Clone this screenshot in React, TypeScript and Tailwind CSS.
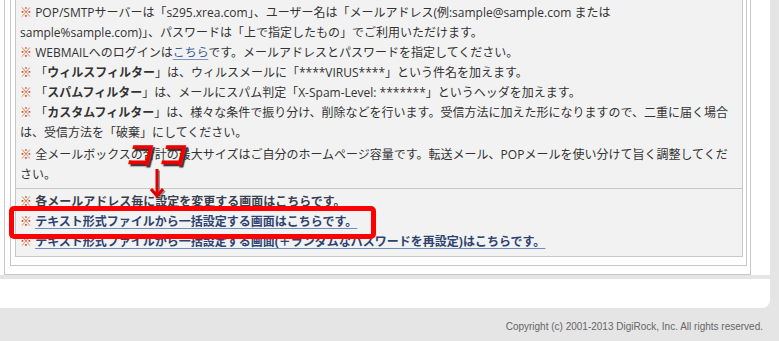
import React from "react";

const Mark = () => <span className="text-[#cc4a10]">※</span>;

export default function App() {
  return (
    <div className="relative w-[779px] h-[341px] overflow-hidden bg-[#e5e5e5] font-['Open_Sans','Noto_Sans_CJK_JP',sans-serif] text-[12px] text-[#333]">
      {/* main white area */}
      <div className="w-[770px] bg-white">
        <div className="ml-[4px] w-[747px] border-x border-b border-[#c8c8c8] pb-[8px]">
          <div className="ml-[5px] w-[737px] border-x border-b border-[#c8c8c8] pb-[8px]">
            <div className="ml-[4px] w-[728px] border-x border-b border-[#c8c8c8] bg-[#f2f2f2]">
              {/* top cell */}
              <div className="pl-[4px] pt-[3px] pb-[3px] leading-[20px] whitespace-nowrap">
                <div>
                  <Mark /> POP/SMTPサーバーは「s295.xrea.com」、ユーザー名は「メールアドレス(例:sample@sample.com または
                  <br />
                  sample%sample.com)」、パスワードは「上で指定したもの」でご利用いただけます。
                </div>
                <div>
                  <Mark /> WEBMAILへのログインは
                  <a className="text-[#3b5e9a] underline decoration-[#7d97c2] underline-offset-2">こちら</a>
                  です。メールアドレスとパスワードを指定してください。
                </div>
                <div>
                  <Mark /> 「<b>ウィルスフィルター</b>」は、ウィルスメールに「****VIRUS****」という件名を加えます。
                </div>
                <div>
                  <Mark /> 「<b>スパムフィルター</b>」は、メールにスパム判定「X-Spam-Level: *******」というヘッダを加えます。
                </div>
                <div>
                  <Mark /> 「<b>カスタムフィルター</b>」は、様々な条件で振り分け、削除などを行います。受信方法に加えた形になりますので、二重に届く場合
                  <br />
                  は、受信方法を「破棄」にしてください。
                </div>
                <div className="mt-[2px]">
                  <Mark /> 全メールボックスの合計の最大サイズはご自分のホームページ容量です。転送メール、POPメールを使い分けて旨く調整してくだ
                  <br />
                  さい。
                </div>
              </div>
              {/* bottom cell */}
              <div className="border-t border-[#c8c8c8] pl-[4px] pt-[3px] pb-[4px] leading-[20px] whitespace-nowrap font-bold">
                <div>
                  <Mark /> <span className="text-[#3a3f4f]">各メールアドレス毎に設定を変更する画面はこちらです。</span>
                </div>
                <div>
                  <Mark />{" "}
                  <a className="text-[#2d4270] underline decoration-[#6d8cc0] underline-offset-2">テキスト形式ファイルから一括設定する画面はこちらです。</a>
                </div>
                <div>
                  <Mark />{" "}
                  <a className="text-[#2d4270] underline decoration-[#6d8cc0] underline-offset-2">テキスト形式ファイルから一括設定する画面(＋ランダムなパスワードを再設定)はこちらです。</a>
                </div>
              </div>
            </div>
          </div>
        </div>
      </div>
      {/* footer band */}
      <div className="mt-[4px] h-[29px] w-[770px] rounded-br-[8px] bg-white" />
      <div className="mt-[12px] pr-[16px] text-right text-[10px] leading-[14px] text-[#666] font-['Liberation_Sans',sans-serif]">
        Copyright (c) 2001-2013 DigiRock, Inc. All rights reserved.
      </div>

      {/* annotation: ココ + arrow */}
      <div className="absolute left-[124px] top-[137px] text-[28px] leading-[32px] font-bold italic text-[#ee0000] tracking-[5px] [text-shadow:2px_2px_1px_#333] font-['Noto_Sans_CJK_JP',sans-serif]">
        ココ
      </div>
      <svg className="absolute left-[148px] top-[168px]" width="20" height="32" viewBox="0 0 20 32">
        <g stroke="#555" strokeWidth="3" fill="none" opacity="0.6" transform="translate(1.5,1.5)">
          <line x1="9" y1="1" x2="9" y2="26" />
          <polyline points="3,21 9,28 15,21" />
        </g>
        <g stroke="#e00000" strokeWidth="3" fill="none">
          <line x1="9" y1="1" x2="9" y2="26" />
          <polyline points="3,21 9,28 15,21" />
        </g>
      </svg>

      {/* red highlight box */}
      <div className="absolute left-[9px] top-[206px] h-[33px] w-[367px] rounded-[5px] border-[5px] border-[#ff0000]" />
    </div>
  );
}
